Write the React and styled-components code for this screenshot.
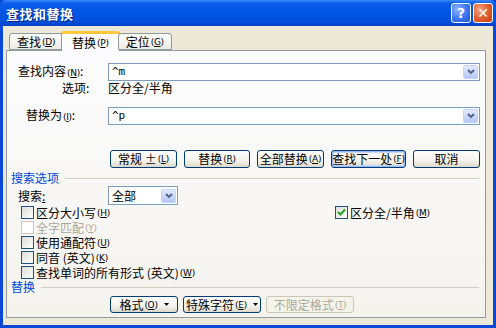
import styled, { createGlobalStyle } from 'styled-components';

const GlobalStyle = createGlobalStyle`
  html, body { margin: 0; padding: 0; }
  body {
    font-family: "Noto Sans CJK SC", "DejaVu Sans", sans-serif;
    font-size: 12px;
    color: #000;
  }
`

const Frame = styled.div`
  width: 496px;
  height: 328px;
  display: flex;
  flex-direction: column;
  overflow: hidden;
  background: #0a48d8;
`

const TitleBar = styled.div`
  height: 26px;
  flex: none;
  display: flex;
  align-items: center;
  padding: 0 3px 0 6px;
  background: linear-gradient(180deg, #3d8cf7 0%, #0a5eea 12%, #0054e3 50%, #0050dc 85%, #0340c4 100%);
  border-radius: 6px 6px 0 0;
`

const Title = styled.div`
  flex: 1;
  color: #fff;
  font-weight: bold;
  font-size: 13px;
  letter-spacing: 0.5px;
  text-shadow: 1px 1px 0 #0a1e7a;
`

const CapButton = styled.div`
  width: 20px;
  height: 20px;
  margin-left: 2px;
  box-sizing: border-box;
  border: 1px solid #fff;
  border-radius: 3px;
  display: flex;
  align-items: center;
  justify-content: center;
  color: #fff;
  font-family: "DejaVu Sans", sans-serif;
  font-weight: bold;
  font-size: 14px;
  background: ${p => p.$close
    ? 'radial-gradient(circle at 30% 30%, #f0a080, #e05a2c 55%, #c43c14)'
    : 'radial-gradient(circle at 30% 30%, #8cb4ff, #3a74f0 55%, #2457d8)'};
`

const Body = styled.div`
  flex: 1;
  display: flex;
  flex-direction: column;
  background: #ece9d8;
  margin: 0 3px 3px 3px;
  padding: 5px 7px 7px 3px;
`

const TabRow = styled.div`
  display: flex;
  align-items: flex-end;
  height: 19px;
  padding-left: 3px;
  position: relative;
  z-index: 1;
`

const Tab = styled.div`
  box-sizing: border-box;
  height: ${p => (p.$active ? '20px' : '17px')};
  margin-bottom: ${p => (p.$active ? '-1px' : '0')};
  padding: 0 ${p => (p.$active ? '10px' : '7px')};
  margin-left: ${p => (p.$active ? '-2px' : '0')};
  margin-right: ${p => (p.$active ? '-2px' : '0')};
  display: flex;
  align-items: center;
  border: 1px solid #919b9c;
  border-bottom: ${p => (p.$active ? 'none' : '1px solid #919b9c')};
  border-top: ${p => (p.$active ? '3px solid #ffc83c' : '1px solid #919b9c')};
  border-radius: 3px 3px 0 0;
  background: ${p => (p.$active ? '#fcfcfe' : 'linear-gradient(#fff, #ecebe5)')};
  line-height: 14px;
  white-space: nowrap;
`

const Panel = styled.div`
  flex: 1;
  border: 1px solid #919b9c;
  background: linear-gradient(180deg, #fcfcfe 0%, #f4f3ee 100%);
  display: flex;
  flex-direction: column;
  padding-right: 5px;
`

const FieldRow = styled.div`
  display: grid;
  grid-template-columns: 101px 1fr;
  align-items: center;
  margin-top: ${p => p.$mt || 0}px;
`

const Label = styled.div`
  padding-left: ${p => p.$indent || 0}px;
  line-height: 14px;
  white-space: nowrap;
`

const Key = styled.span`
  font-family: "DejaVu Sans", sans-serif;
  font-size: 9px;
  letter-spacing: -0.3px;
  margin-left: 1px;
  & u { text-decoration: underline; }
`

const Combo = styled.div`
  box-sizing: border-box;
  height: ${p => p.$h || 18}px;
  width: ${p => p.$width || 'auto'};
  border: 1px solid #7f9db9;
  background: #fff;
  display: flex;
  align-items: center;
  padding: 0 1px 0 3px;
  font-family: ${p => (p.$mono ? '"DejaVu Sans Mono", monospace' : 'inherit')};
  font-size: ${p => (p.$mono ? '11px' : '12px')};
`

const ComboText = styled.div`
  flex: 1;
  line-height: 14px;
`

const DropArrow = styled.div`
  width: 15px;
  height: 14px;
  box-sizing: border-box;
  border: 1px solid #c3d3fd;
  border-radius: 2px;
  background: linear-gradient(#e1eaff, #b4c8f6);
  display: flex;
  align-items: center;
  justify-content: center;
`

const ButtonRow = styled.div`
  display: flex;
  gap: ${p => p.$gap || 7}px;
  margin-left: 103px;
  margin-top: ${p => p.$mt || 0}px;
`

const Button = styled.div`
  box-sizing: border-box;
  width: ${p => p.$w}px;
  height: ${p => p.$h || 18}px;
  border: 1px solid ${p => (p.$disabled ? '#c9c7ba' : '#003c74')};
  border-radius: 3px;
  background: ${p => (p.$disabled ? '#f5f4ea' : 'linear-gradient(#ffffff 0%, #f4f3ee 60%, #dcd8cb 100%)')};
  box-shadow: ${p => (p.$default ? 'inset 0 0 0 1px #98b8f6, inset 0 0 0 2px #c6d6fa' : 'none')};
  color: ${p => (p.$disabled ? '#aca899' : '#000')};
  display: flex;
  align-items: center;
  justify-content: center;
  line-height: 14px;
  white-space: nowrap;
`

const Caret = styled.span`
  display: inline-flex;
  margin-left: 6px;
`

const Section = styled.div`
  display: flex;
  align-items: center;
  gap: 6px;
  padding-left: 4px;
  margin-top: ${p => p.$mt || 0}px;
  height: 14px;
  color: #0046d5;
  line-height: 14px;

  &::after {
    content: '';
    flex: 1;
    height: 1px;
    background: #d0d0bf;
    margin-right: 1px;
  }
`

const OptionArea = styled.div`
  display: grid;
  grid-template-columns: 314px 1fr;
  padding-left: 14px;
`

const OptionColumn = styled.div`
  display: flex;
  flex-direction: column;
`

const Option = styled.div`
  display: flex;
  align-items: center;
  gap: 2px;
  height: 15px;
  white-space: nowrap;
  color: ${p => (p.$disabled ? '#aca899' : '#000')};
`

const OptionText = styled.div`
  display: flex;
  align-items: center;
  height: 14px;
  line-height: 14px;
  overflow: visible;
`

const Box = styled.div`
  box-sizing: border-box;
  width: 13px;
  height: 13px;
  border: 1px solid ${p => (p.$disabled ? '#cac8bb' : '#1c5180')};
  background: ${p => (p.$disabled ? '#fff' : 'linear-gradient(135deg, #dcdcd7, #fff)')};
  display: flex;
  align-items: center;
  justify-content: center;
`

const Chevron = () => (
  <svg width="8" height="6" viewBox="0 0 8 6">
    <path d="M1 1 L4 4 L7 1" fill="none" stroke="#4d6185" strokeWidth="1.8" />
  </svg>
)

const Check = () => (
  <svg width="9" height="9" viewBox="0 0 9 9">
    <path d="M1 4 L3.5 6.5 L8 1.5" fill="none" stroke="#21a121" strokeWidth="2" />
  </svg>
)

const Tri = () => (
  <svg width="5" height="3" viewBox="0 0 5 3">
    <path d="M0 0 H5 L2.5 3 Z" fill="#000" />
  </svg>
)

const K = ({ k }) => (
  <Key>(<u>{k}</u>)</Key>
)

const leftOptions = [
  { label: '区分大小写', k: 'H' },
  { label: '全字匹配', k: 'Y', disabled: true },
  { label: '使用通配符', k: 'U' },
  { label: '同音 (英文)', k: 'K' },
  { label: '查找单词的所有形式 (英文)', k: 'W' },
]

const rightOptions = [
  { label: '区分全/半角', k: 'M', checked: true },
]

const OptionList = ({ items }) => (
  <OptionColumn>
    {items.map(o => (
      <Option key={o.k} $disabled={o.disabled}>
        <Box $disabled={o.disabled}>{o.checked && <Check />}</Box>
        <OptionText>{o.label}<K k={o.k} /></OptionText>
      </Option>
    ))}
  </OptionColumn>
)

function App() {
  return (
    <>
      <GlobalStyle />
      <Frame>
        <TitleBar>
          <Title>查找和替换</Title>
          <CapButton>?</CapButton>
          <CapButton $close>✕</CapButton>
        </TitleBar>
        <Body>
          <TabRow>
            <Tab>查找<K k="D" /></Tab>
            <Tab $active>替换<K k="P" /></Tab>
            <Tab>定位<K k="G" /></Tab>
          </TabRow>
          <Panel>
            <FieldRow $mt={12}>
              <Label $indent={11}>查找内容<K k="N" />:</Label>
              <Combo $mono>
                <ComboText>^m</ComboText>
                <DropArrow><Chevron /></DropArrow>
              </Combo>
            </FieldRow>
            <FieldRow>
              <Label $indent={55}>选项:</Label>
              <Label>区分全/半角</Label>
            </FieldRow>
            <FieldRow $mt={12}>
              <Label $indent={19}>替换为<K k="I" />:</Label>
              <Combo $mono>
                <ComboText>^p</ComboText>
                <DropArrow><Chevron /></DropArrow>
              </Combo>
            </FieldRow>

            <ButtonRow $mt={25}>
              <Button $w={67}>常规 ± <K k="L" /></Button>
              <Button $w={66}>替换<K k="R" /></Button>
              <Button $w={67}>全部替换<K k="A" /></Button>
              <Button $w={75} $default>查找下一处<K k="F" /></Button>
              <Button $w={67}>取消</Button>
            </ButtonRow>

            <Section $mt={3}>搜索选项</Section>
            <FieldRow $mt={1}>
              <Label $indent={11}>搜索<u>:</u></Label>
              <Combo $width="70px" $h={19}>
                <ComboText>全部</ComboText>
                <DropArrow><Chevron /></DropArrow>
              </Combo>
            </FieldRow>

            <OptionArea>
              <OptionList items={leftOptions} />
              <OptionList items={rightOptions} />
            </OptionArea>

            <Section>替换</Section>
            <ButtonRow $mt={2} $gap={5}>
              <Button $w={68} $h={17}>格式<K k="O" /><Caret><Tri /></Caret></Button>
              <Button $w={78} $h={17}>特殊字符<K k="E" /><Caret><Tri /></Caret></Button>
              <Button $w={88} $h={17} $disabled>不限定格式<K k="T" /></Button>
            </ButtonRow>
          </Panel>
        </Body>
      </Frame>
    </>
  )
}

export default App;
